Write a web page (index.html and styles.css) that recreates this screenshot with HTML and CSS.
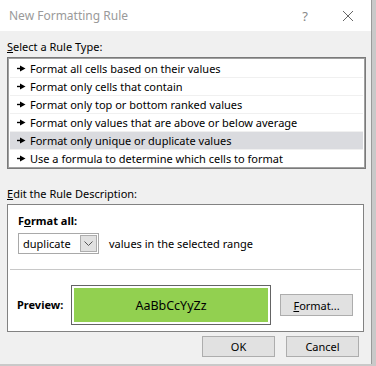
FILE: index.html
```html
<!DOCTYPE html>
<html lang="en">
<head>
    <meta charset="UTF-8">
    <title>New Formatting Rule</title>
    <link rel="stylesheet" href="styles.css">
</head>
<body>
    <div class="dialog">
        <div class="titlebar">
            <span class="title">New Formatting Rule</span>
            <span class="help">?</span>
            <svg class="close" width="12" height="12" viewBox="0 0 12 12">
                <path d="M1 1 L11 11 M11 1 L1 11" stroke="#666" stroke-width="1" fill="none"/>
            </svg>
        </div>

        <div class="content">
            <div class="label label-top"><u>S</u>elect a Rule Type:</div>
            <ul class="listbox">
                <li><svg class="arrow" width="9" height="7" viewBox="0 0 9 7"><path d="M0 3.5 H4" stroke="#000" stroke-width="1.4"/><path d="M3 0.5 L8.5 3.5 L3 6.5 Z" fill="#000"/></svg>Format all cells based on their values</li>
                <li><svg class="arrow" width="9" height="7" viewBox="0 0 9 7"><path d="M0 3.5 H4" stroke="#000" stroke-width="1.4"/><path d="M3 0.5 L8.5 3.5 L3 6.5 Z" fill="#000"/></svg>Format only cells that contain</li>
                <li><svg class="arrow" width="9" height="7" viewBox="0 0 9 7"><path d="M0 3.5 H4" stroke="#000" stroke-width="1.4"/><path d="M3 0.5 L8.5 3.5 L3 6.5 Z" fill="#000"/></svg>Format only top or bottom ranked values</li>
                <li><svg class="arrow" width="9" height="7" viewBox="0 0 9 7"><path d="M0 3.5 H4" stroke="#000" stroke-width="1.4"/><path d="M3 0.5 L8.5 3.5 L3 6.5 Z" fill="#000"/></svg>Format only values that are above or below average</li>
                <li class="selected"><svg class="arrow" width="9" height="7" viewBox="0 0 9 7"><path d="M0 3.5 H4" stroke="#000" stroke-width="1.4"/><path d="M3 0.5 L8.5 3.5 L3 6.5 Z" fill="#000"/></svg>Format only unique or duplicate values</li>
                <li><svg class="arrow" width="9" height="7" viewBox="0 0 9 7"><path d="M0 3.5 H4" stroke="#000" stroke-width="1.4"/><path d="M3 0.5 L8.5 3.5 L3 6.5 Z" fill="#000"/></svg>Use a formula to determine which cells to format</li>
            </ul>

            <div class="label label-desc"><u>E</u>dit the Rule Description:</div>
            <div class="descbox">
                <div class="desc-top">
                    <div class="bold">F<u>o</u>rmat all:</div>
                    <div class="select-row">
                        <div class="select">
                            <span>duplicate</span>
                            <span class="drop">
                                <svg width="9" height="5" viewBox="0 0 9 5"><path d="M0.5 0.5 L4.5 4.5 L8.5 0.5" stroke="#555" fill="none"/></svg>
                            </span>
                        </div>
                        <span>values in the selected range</span>
                    </div>
                </div>
                <div class="preview-row">
                    <span class="bold">Preview:</span>
                    <div class="preview"><div class="swatch">AaBbCcYyZz</div></div>
                    <button class="btn btn-format"><u>F</u>ormat...</button>
                </div>
            </div>

            <div class="buttons">
                <button class="btn">OK</button>
                <button class="btn">Cancel</button>
            </div>
        </div>
    </div>
</body>
</html>
```

FILE: styles.css
```css
body {
    margin: 0;
    background-color: #c9c9c9;
    font-family: "Noto Sans", "Open Sans", sans-serif;
    font-size: 11px;
    color: #000;
    width: 376px;
    height: 366px;
    overflow: hidden;
}
.dialog {
    width: 371px;
    height: 364px;
    background-color: #f0f0f0;
    border-right: 1px solid #9a9a9a;
}
.titlebar {
    height: 31px;
    background-color: #fff;
    display: flex;
    align-items: center;
    padding-left: 9px;
}
.title {
    color: #9a9a9a;
    font-size: 12px;
    flex: 1;
}
.help {
    color: #888;
    font-size: 13px;
    margin-right: 34px;
}
.close {
    margin-right: 17px;
}
.content {
    padding: 0 7px;
}
.label {
    line-height: 16px;
}
.label-top {
    margin-top: 8px;
}
.label-desc {
    margin-top: 17px;
}
u {
    text-decoration-thickness: 1px;
    text-underline-offset: 1px;
}
.listbox {
    list-style: none;
    margin: 2px 0 0 0;
    padding: 2px 2px 0 2px;
    width: 353px;
    background-color: #fff;
    border: 1px solid #7a7a7a;
    box-shadow: inset 0 0 0 1px #a0a0a0;
}
.listbox li {
    height: 17px;
    line-height: 17px;
    border-bottom: 1px solid #f0f0f0;
    display: flex;
    align-items: center;
    padding-left: 7px;
}
.listbox li:last-child {
    border-bottom-color: transparent;
}
.listbox li.selected {
    background-color: #dadbdf;
}
.arrow {
    margin-right: 4px;
}
.descbox {
    margin-top: 2px;
    width: 355px;
    height: 126px;
    background-color: #fff;
    border: 1px solid #828282;
    display: flex;
    flex-direction: column;
}
.desc-top {
    margin: 0 2px;
    padding: 8px 0 0 8px;
    height: 65px;
    box-sizing: border-box;
    border-bottom: 1px solid #c8c8c8;
}
.bold {
    font-weight: bold;
    line-height: 16px;
}
.select-row {
    display: flex;
    align-items: center;
    margin-top: 4px;
}
.select {
    width: 74px;
    height: 19px;
    border: 1px solid #a9a9a9;
    display: flex;
    align-items: center;
    justify-content: space-between;
    padding-left: 4px;
    padding-right: 1px;
    box-sizing: content-box;
    margin-right: 10px;
}
.select span:first-child {
    flex: 1;
}
.drop {
    width: 17px;
    height: 17px;
    background-color: #e1e1e1;
    border: 1px solid #adadad;
    box-sizing: border-box;
    display: flex;
    align-items: center;
    justify-content: center;
}
.preview-row {
    display: flex;
    align-items: center;
    padding-left: 9px;
    margin-top: 15px;
}
.preview-row .bold {
    width: 54px;
}
.preview {
    border: 1px solid #646464;
    padding: 2px;
    background-color: #fff;
}
.swatch {
    width: 194px;
    height: 34px;
    background-color: #92d050;
    display: flex;
    align-items: center;
    justify-content: center;
    font-size: 12.5px;
}
.btn {
    font-family: "Noto Sans", "Open Sans", sans-serif;
    font-size: 11px;
    background-color: #e1e1e1;
    border: 1px solid #adadad;
    padding: 0;
    color: #000;
}
.btn-format {
    width: 73px;
    height: 22px;
    margin-left: 9px;
}
.buttons {
    display: flex;
    justify-content: flex-end;
    gap: 11px;
    margin-top: 4px;
    padding-right: 5px;
}
.buttons .btn {
    width: 73px;
    height: 21px;
}
```
